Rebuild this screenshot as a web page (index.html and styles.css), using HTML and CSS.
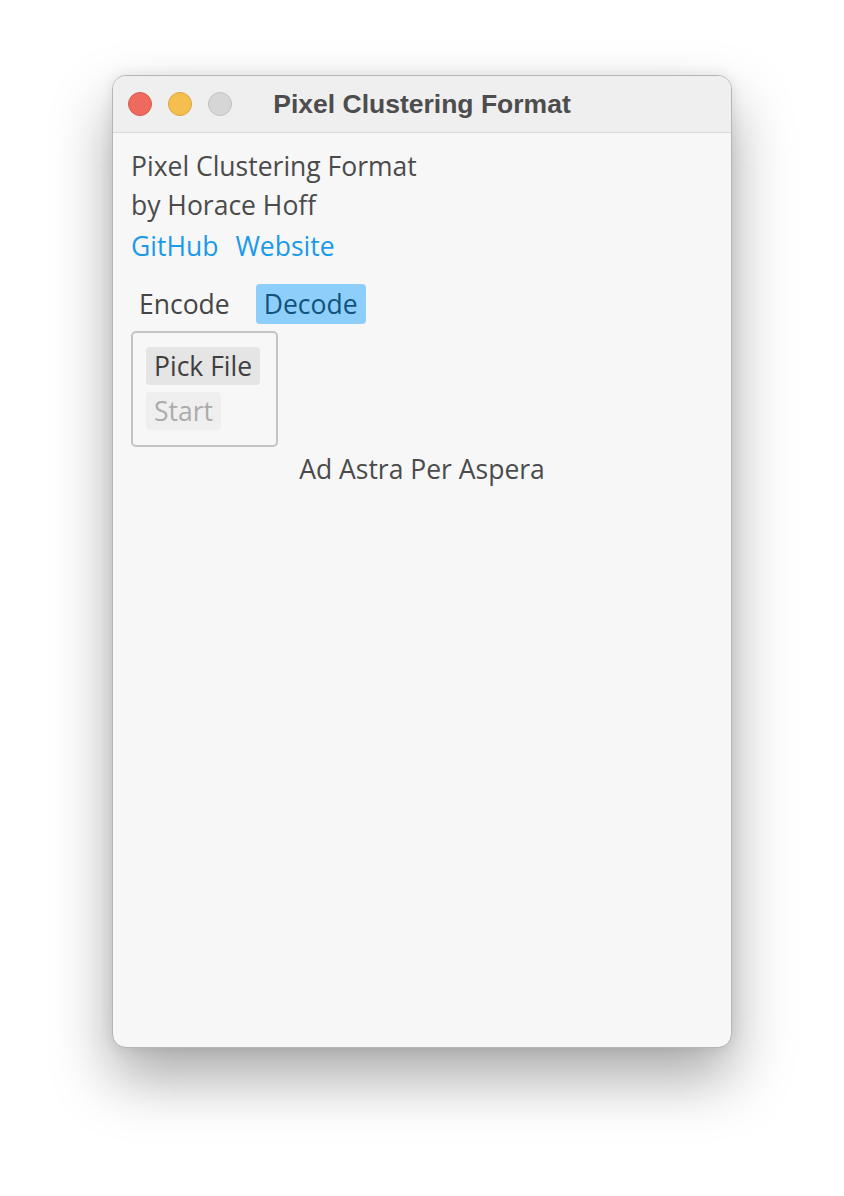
FILE: index.html
```html
<!DOCTYPE html>
<html>
<head>
<meta charset="utf-8">
<link rel="stylesheet" href="styles.css">
</head>
<body>
<div class="window">
  <div class="titlebar">
    <div class="lights">
      <span class="light red"></span>
      <span class="light yellow"></span>
      <span class="light gray"></span>
    </div>
    <div class="title">Pixel Clustering Format</div>
    <div></div>
  </div>
  <div class="content">
    <div class="line">Pixel Clustering Format</div>
    <div class="line">by Horace Hoff</div>
    <div class="links"><a class="link">GitHub</a><a class="link">Website</a></div>
    <div class="tabs"><span class="tab">Encode</span><span class="tab active">Decode</span></div>
    <div class="panel">
      <span class="btn">Pick File</span>
      <span class="btn disabled">Start</span>
    </div>
    <div class="motto">Ad Astra Per Aspera</div>
  </div>
</div>
</body>
</html>
```

FILE: styles.css
```css
html, body {
  margin: 0;
  background: #ffffff;
}
body {
  padding: 75px 0 0 112px;
  height: 1196px;
  box-sizing: border-box;
  overflow: hidden;
}
.window {
  width: 620px;
  height: 973px;
  box-sizing: border-box;
  background: #f7f7f7;
  border: 1px solid #b5b5b5;
  border-radius: 14px;
  overflow: hidden;
  box-shadow: 0 30px 60px rgba(0,0,0,0.34), 0 0 14px rgba(0,0,0,0.09);
  font-family: "Open Sans", "Noto Sans", sans-serif;
  color: #4b4b4b;
}
.titlebar {
  height: 57px;
  box-sizing: border-box;
  background: #efefef;
  border-bottom: 1px solid #d9d9d9;
  display: grid;
  grid-template-columns: 1fr auto 1fr;
  align-items: center;
}
.lights {
  display: flex;
  gap: 16px;
  padding-left: 15px;
}
.light {
  width: 24px;
  height: 24px;
  border-radius: 50%;
  box-sizing: border-box;
}
.red { background: #ee6a5f; border: 1px solid #d65a50; }
.yellow { background: #f5bf4f; border: 1px solid #d9a63e; }
.gray { background: #d6d6d6; border: 1px solid #c2c2c2; }
.title {
  text-align: center;
  font-family: "Liberation Sans", Arial, sans-serif;
  font-weight: bold;
  font-size: 26.5px;
  color: #4d4d4d;
}
.content {
  padding: 14px 18px 0 18px;
  font-size: 26.5px;
}
.line {
  line-height: 39px;
}
.links {
  margin-top: 3px;
  display: flex;
  gap: 17px;
  line-height: 36px;
}
.link {
  color: #1a9ae8;
}
.tabs {
  margin-top: 20px;
  display: flex;
  gap: 10px;
}
.tab {
  padding: 0 8px;
  line-height: 40px;
  border-radius: 4px;
  color: #454545;
}
.tab.active {
  background: #8dcffa;
  color: #13527c;
  margin-left: 8px;
}
.panel {
  margin-top: 7px;
  width: 147px;
  height: 116px;
  box-sizing: border-box;
  border: 2px solid #c4c4c4;
  border-radius: 5px;
  padding: 14px 13px;
  display: flex;
  flex-direction: column;
  align-items: flex-start;
  gap: 7px;
}
.btn {
  background: #e5e5e5;
  border-radius: 4px;
  padding: 0 8px;
  line-height: 38px;
  color: #3f3f3f;
}
.btn.disabled {
  background: #efefef;
  color: #ababab;
}
.motto {
  text-align: center;
  line-height: 44px;
  margin-top: 0;
}
```
